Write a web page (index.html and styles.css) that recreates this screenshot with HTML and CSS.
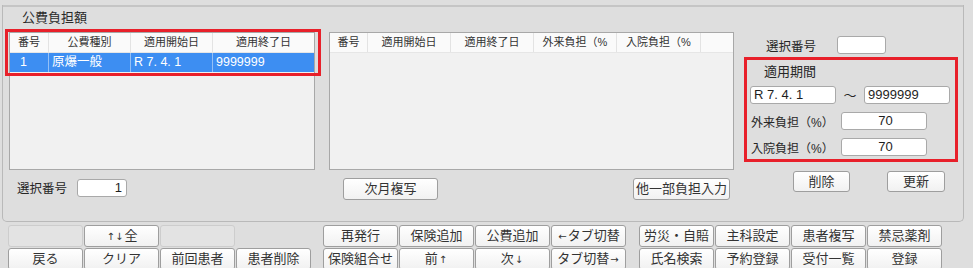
FILE: index.html
```html
<!DOCTYPE html>
<html lang="ja">
<head>
<meta charset="utf-8">
<link rel="stylesheet" href="styles.css">
</head>
<body>
<div class="screen">
  <div class="panel">
    <div class="topline"></div>
    <div class="title">公費負担額</div>
    <div class="cols">
      <div class="col-left">
        <div class="list">
          <div class="hl-red"></div>
          <div class="thead">
            <div class="th lw1">番号</div>
            <div class="th lw2">公費種別</div>
            <div class="th lw2">適用開始日</div>
            <div class="th rest">適用終了日</div>
          </div>
          <div class="trow">
            <div class="td lw1 first">1</div>
            <div class="td lw2">原爆一般</div>
            <div class="td lw2">R 7. 4. 1</div>
            <div class="td rest">9999999</div>
          </div>
        </div>
        <div class="selrow">
          <span class="lbl-sel">選択番号</span>
          <span class="inp inp-sel">1</span>
        </div>
      </div>
      <div class="col-mid">
        <div class="list">
          <div class="thead">
            <div class="th mw1">番号</div>
            <div class="th mw2">適用開始日</div>
            <div class="th mw2">適用終了日</div>
            <div class="th mw2">外来負担（%</div>
            <div class="th mw3">入院負担（%</div>
            <div class="th rest"></div>
          </div>
        </div>
        <div class="midbtns">
          <div class="btn b-jigetsu">次月複写</div>
          <div class="btn b-tabu">他一部負担入力</div>
        </div>
      </div>
      <div class="col-right">
        <div class="selrow2">
          <span class="lbl-sel2">選択番号</span>
          <span class="inp inp-sel2"></span>
        </div>
        <div class="redbox">
          <div class="period-lbl">適用期間</div>
          <div class="daterow">
            <span class="inp inp-date">R 7. 4. 1</span>
            <span class="tilde">～</span>
            <span class="inp inp-date">9999999</span>
          </div>
          <div class="loadrow first-load">
            <span class="lbl-load">外来負担（%）</span>
            <span class="inp inp-load">70</span>
          </div>
          <div class="loadrow second-load">
            <span class="lbl-load">入院負担（%）</span>
            <span class="inp inp-load">70</span>
          </div>
        </div>
        <div class="rbtns">
          <div class="btn b-del">削除</div>
          <div class="btn b-upd">更新</div>
        </div>
      </div>
    </div>
  </div>
  <div class="bottom">
    <div class="bgroup">
      <div class="bd"></div>
      <div class="btn"><span class="arr">↑↓</span>全</div>
      <div class="bd"></div>
      <div class="none"></div>
      <div class="btn">戻る</div>
      <div class="btn">クリア</div>
      <div class="btn">前回患者</div>
      <div class="btn">患者削除</div>
    </div>
    <div class="bgroup g-mid">
      <div class="btn">再発行</div>
      <div class="btn">保険追加</div>
      <div class="btn">公費追加</div>
      <div class="btn"><span class="arr">←</span>タブ切替</div>
      <div class="btn">保険組合せ</div>
      <div class="btn">前<span class="arr">↑</span></div>
      <div class="btn">次<span class="arr">↓</span></div>
      <div class="btn">タブ切替<span class="arr">→</span></div>
    </div>
    <div class="bgroup g-right">
      <div class="btn">労災・自賠</div>
      <div class="btn">主科設定</div>
      <div class="btn">患者複写</div>
      <div class="btn">禁忌薬剤</div>
      <div class="btn">氏名検索</div>
      <div class="btn">予約登録</div>
      <div class="btn">受付一覧</div>
      <div class="btn">登録</div>
    </div>
  </div>
</div>
</body>
</html>
```

FILE: styles.css
```css
* { box-sizing: border-box; }

body {
  margin: 0;
  background: #dedede;
  font-family: "Liberation Sans", "Noto Sans CJK JP", sans-serif;
  font-size: 13px;
  color: #262626;
}

.screen {
  width: 973px;
  height: 268px;
  overflow: hidden;
}

.panel {
  margin-left: 2px;
  width: 962px;
  height: 217px;
  border: 1px solid #b9b9b9;
  border-top: none;
  border-radius: 0 0 5px 5px;
}

.topline {
  margin-top: 5px;
  border-top: 2px solid #c5c5c5;
}

.title {
  margin: 3px 0 0 19px;
  height: 16px;
  line-height: 16px;
  font-size: 13px;
  color: #2a2a2a;
}

.cols {
  display: flex;
  margin-top: 6px;
}

.col-left {
  margin-left: 6px;
  width: 306px;
}

.col-mid {
  margin-left: 14px;
  width: 405px;
}

.col-right {
  margin-left: 10px;
  width: 214px;
}

.list {
  position: relative;
  height: 138px;
  border: 1px solid #a8a8a8;
  background: #f1f1f1;
}

.hl-red {
  position: absolute;
  left: -5px;
  top: -4px;
  width: 316px;
  height: 47px;
  border: 3px solid #e8202a;
}

.thead {
  display: flex;
  height: 20px;
  background: #fafafa;
  border-bottom: 1px solid #e6e6e6;
}

.th {
  border-right: 1px solid #e3e3e3;
  text-align: center;
  font-size: 11px;
  line-height: 19px;
  color: #333;
  white-space: nowrap;
  overflow: hidden;
}

.rest { flex: 1; border-right: none; }

.lw1 { width: 39px; }
.lw2 { width: 82px; }
.mw1 { width: 38px; }
.mw2 { width: 83px; }
.mw3 { width: 84px; }

.trow {
  display: flex;
  height: 19px;
  background: #3d8ef2;
  color: #fff;
  font-size: 12.5px;
  line-height: 19px;
}

.td {
  border-right: 1px solid #94c0f6;
  padding-left: 3px;
  white-space: nowrap;
  overflow: hidden;
}

.td.first { padding-left: 10px; }
.td.rest { border-right: none; }

.inp {
  display: block;
  background: #fff;
  border: 1px solid #a9a9a9;
  border-radius: 3px;
  font-size: 13px;
  line-height: 16px;
  padding-left: 3px;
  color: #1e1e1e;
  white-space: nowrap;
}

.selrow {
  display: flex;
  align-items: center;
  margin-top: 8px;
}

.lbl-sel {
  margin-left: 8px;
  width: 60px;
  font-size: 12.5px;
}

.inp-sel {
  width: 50px;
  height: 18px;
  text-align: right;
  padding-right: 4px;
}

.selrow2 {
  display: flex;
  align-items: center;
  margin-top: 4px;
  height: 18px;
}

.lbl-sel2 {
  margin-left: 22px;
  width: 71px;
  font-size: 12.5px;
}

.inp-sel2 {
  width: 49px;
  height: 18px;
}

.redbox {
  margin-top: 3px;
  height: 105px;
  border: 3px solid #e8202a;
}

.period-lbl {
  margin: 4px 0 0 17px;
  height: 16px;
  line-height: 16px;
  font-size: 13px;
}

.daterow {
  display: flex;
  align-items: center;
  margin: 5px 0 0 3px;
}

.inp-date {
  width: 86px;
  height: 18px;
}

.tilde {
  width: 28px;
  text-align: center;
  font-size: 13px;
}

.loadrow {
  display: flex;
  align-items: center;
  margin-left: 4px;
}

.first-load { margin-top: 8px; }
.second-load { margin-top: 8px; }

.lbl-load {
  width: 90px;
  font-size: 12px;
  white-space: nowrap;
}

.inp-load {
  width: 86px;
  height: 18px;
  text-align: center;
}

.btn {
  background: linear-gradient(#ffffff, #f1f1f1);
  border: 1px solid #9e9e9e;
  border-radius: 3px;
  text-align: center;
  font-size: 13px;
  line-height: 20px;
  color: #333;
  white-space: nowrap;
}

.arr {
  font-family: "DejaVu Sans", sans-serif;
  font-size: 10px;
  margin: 0 1px;
}

.midbtns {
  display: flex;
  justify-content: space-between;
  align-items: flex-start;
  margin: 8px 4px 0 14px;
}

.b-jigetsu { width: 95px; height: 22px; }
.b-tabu { width: 97px; height: 22px; }

.rbtns {
  display: flex;
  margin-top: 9px;
}

.b-del { width: 57px; height: 21px; margin-left: 49px; line-height: 19px; }
.b-upd { width: 58px; height: 21px; margin-left: 37px; line-height: 19px; }

.bottom {
  display: flex;
  margin-top: 3px;
  margin-left: 8px;
}

.bgroup {
  display: grid;
  grid-template-columns: repeat(4, 75px);
  grid-auto-rows: 22px;
  gap: 1px;
}

.g-mid { margin-left: 12px; }
.g-right { margin-left: 13px; }

.bd {
  background: #e3e3e3;
  border: 1px solid #cdcdcd;
  border-radius: 3px;
}
```
